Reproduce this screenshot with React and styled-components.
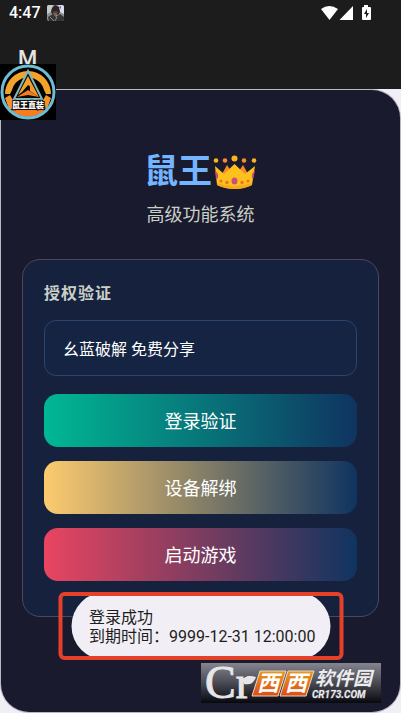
import { useState } from "react";
import styled, { createGlobalStyle, ThemeProvider } from "styled-components";

const theme = {
  bar: "#1c1c1c",
  surface: "#f1eff5",
  panel: "#1a1a2e",
  card: "#16213e",
  field: "#152442",
  fieldBorder: "#2a456f",
  cardBorder: "#484a60",
  muted: "#c9d0c8",
  primary: "#74b5ff",
  navy: "#0f3460",
  alert: "#e5412a",
  font: `Roboto, "Noto Sans CJK SC", sans-serif`,
};

const App = () => {
  const [code, setCode] = useState("幺蓝破解 免费分享");

  return (
    <ThemeProvider theme={theme}>
      <GlobalStyle />
      <Screen>
        <Header>
          <StatusBar>
            <StatusGroup>
              <Time>4:47</Time>
              <Avatar />
            </StatusGroup>
            <StatusIcons />
          </StatusBar>
          <AppName>M</AppName>
        </Header>
        <Panel>
          <Title>
            鼠王
            <Crown />
          </Title>
          <Subtitle>高级功能系统</Subtitle>
          <Card>
            <Label htmlFor="code">授权验证</Label>
            <Field
              id="code"
              type="text"
              value={code}
              onChange={(e) => setCode(e.target.value)}
            />
            <Actions>
              <Action type="button" $from="#00b894">
                登录验证
              </Action>
              <Action type="button" $from="#fdcb6e">
                设备解绑
              </Action>
              <Action type="button" $from="#e94560">
                启动游戏
              </Action>
            </Actions>
          </Card>
        </Panel>
        <FloatingLogo />
        <Highlight>
          <Toast role="status">
            <p>登录成功</p>
            <p>到期时间：9999-12-31 12:00:00</p>
          </Toast>
        </Highlight>
        <Watermark />
      </Screen>
    </ThemeProvider>
  );
};

const Avatar = () => (
  <svg width="17" height="16" viewBox="0 0 17 16" aria-hidden="true">
    <rect width="17" height="16" rx="2" fill="#8d9190" />
    <path d="M0 2Q0 0 2 0H6L4 7L0 9Z" fill="#c3cbc8" />
    <path d="M11 0H15Q17 0 17 2V9L13 7Z" fill="#dcdce6" />
    <path d="M5 3L8 0L12 2L13 7L11 10H6L4 7Z" fill="#292426" />
    <path d="M6 6H11L10 10L8 11L6 9Z" fill="#875c4f" />
    <path d="M6 7H11" stroke="#221c20" />
    <path d="M1 12L6 9L9 12L13 9L17 12V14Q17 16 15 16H2Z" fill="#353536" />
    <path d="M3 12L7 16M10 12L8 16" stroke="#8c8880" />
    <path d="M12 2L14 1V4Z" fill="#7755c8" />
  </svg>
);

const StatusIcons = () => (
  <svg width="50" height="16" viewBox="0 0 50 16" fill="#fff" aria-hidden="true">
    <path d="M0 4Q8 -2 17 4L8.500 15Z" />
    <path d="M32 1V15H18.500Z" />
    <path d="M41 2H43V0H47V2H49Q50 2 50 3V14Q50 15 49 15H42Q41 15 41 14V3Q41 2 42 2Z" />
    <path d="M46 4L43 9H45V13L48 8H46Z" fill="#1c1c1c" />
  </svg>
);

const Crown = () => (
  <svg width="44" height="36" viewBox="0 -2 44 36" aria-hidden="true">
    <path d="M9 19L14 10L20 19ZM24 19L30 10L35 19Z" fill="#f68b2b" />
    <path
      d="M2 11L11 19L21.500 9L32 19L42 11L39 30Q31 34 22 34Q12 34 4 30Z"
      fill="#fcc21b"
    />
    <path d="M4 28Q20 34 39 28L39 30Q31 34 22 34Q12 34 4 30Z" fill="#f5a91c" />
    <path d="M2 16Q6 18 5 23L3 24ZM42 16Q38 18 39 23L40 24Z" fill="#cb4a72" />
    <ellipse cx="21.500" cy="26" rx="3" ry="3.500" fill="#cd4d7d" />
    <g fill="#f06d2d">
      <circle cx="8" cy="26" r="1.500" />
      <circle cx="14" cy="27.500" r="1.700" />
      <circle cx="29" cy="27.500" r="1.700" />
      <circle cx="35" cy="26" r="1.500" />
    </g>
    <g fill="#fbb51c">
      <circle cx="3" cy="5.500" r="2.300" />
      <circle cx="21.500" cy="3.500" r="3" />
      <circle cx="41" cy="5.500" r="2.300" />
    </g>
    <circle cx="12" cy="5.500" r="2.300" fill="#f68b2b" />
    <circle cx="31" cy="5.500" r="2.300" fill="#f68b2b" />
  </svg>
);

const FloatingLogo = () => (
  <LogoSvg viewBox="0 0 56 56" role="img" aria-label="鼠王直装">
    <rect width="56" height="56" fill="#000" />
    <path
      d="M5 30A23 23 0 0 1 51 30L46 30L44 26A16.500 16.500 0 0 0 12 26L10 30Z"
      fill="#f3a22c"
    />
    <path d="M5 34L10 31L13 36V45H9ZM51 34L46 31L43 36V45H47Z" fill="#f3932a" />
    <path d="M11 46H45Q38 53 28 53Q18 53 11 46Z" fill="#f57d20" />
    <circle cx="28" cy="28" r="26" fill="none" stroke="#6ebbd5" strokeWidth="3" />
    <path d="M28 7L42 35H14Z" fill="#080808" stroke="#7fb8bf" strokeWidth="2" />
    <path d="M28 12L31 18V23L28 21L22 28L18 31Z" fill="#f3a22c" />
    <path d="M31 18L39 33L30 27V22Z" fill="#f39a2a" />
    <path d="M17 33L28 26L39 33L28 31Z" fill="#f57d20" />
    <text
      x="28"
      y="44"
      textAnchor="middle"
      fontSize="8"
      fontWeight="900"
      fill="#fff"
      stroke="#14110d"
      strokeWidth="2"
      paintOrder="stroke"
    >
      鼠王直装
    </text>
  </LogoSvg>
);

const Watermark = () => (
  <WatermarkSvg viewBox="0 0 180 40" role="img" aria-label="西西软件园 CR173.COM">
    <defs>
      <linearGradient id="plate" x2="0" y2="1">
        <stop stopColor="#85858f" />
        <stop offset="0.5" stopColor="#494953" />
        <stop offset="1" stopColor="#08080f" />
      </linearGradient>
      <linearGradient id="tile" x2="0" y2="1">
        <stop stopColor="#e79a24" />
        <stop offset="1" stopColor="#df4b18" />
      </linearGradient>
    </defs>
    <rect width="180" height="40" fill="url(#plate)" />
    <text
      x="4"
      y="35"
      fill="#e6e6e8"
      stroke="#e6e6e8"
      fontFamily="Liberation Serif, serif"
      fontSize="46"
    >
      Cr
    </text>
    <path d="M42 18Q44 11 55 14Q52 23 43 21Z" fill="#e6e6e8" />
    <g fill="url(#tile)" stroke="#e9d7c2">
      <path d="M59 8H85L77 33H51Z" />
      <path d="M87 8H113L105 33H79Z" />
    </g>
    <g fill="#fff" fontSize="22" fontStyle="italic" fontWeight="700">
      <text x="56" y="28">
        西
      </text>
      <text x="84" y="28">
        西
      </text>
    </g>
    <g
      fill="#ececee"
      stroke="#55555c"
      strokeWidth="1"
      paintOrder="stroke"
      fontStyle="italic"
      fontWeight="700"
    >
      <text x="114" y="22" fontSize="19">
        软件园
      </text>
      <text x="111" y="35" fontSize="10">
        CR173.COM
      </text>
    </g>
  </WatermarkSvg>
);

const GlobalStyle = createGlobalStyle`
  * {
    box-sizing: border-box;
  }

  body {
    margin: 0;
    background: ${theme.surface};
    font-family: ${theme.font};
  }

  p, h1 {
    margin: 0;
  }
`;

const Screen = styled.div`
  position: relative;
  display: flex;
  flex-flow: column;
  min-height: 100vh;
`;

const Header = styled.header`
  height: 89px;
  background: ${(props) => props.theme.bar};
  color: #fff;
`;

const StatusBar = styled.div`
  display: flex;
  justify-content: space-between;
  align-items: center;
  height: 26px;
  padding: 0 30px 0 9px;
`;

const StatusGroup = styled.div`
  display: flex;
  align-items: center;
  gap: 6px;
`;

const Time = styled.span`
  font-size: 16px;
  font-weight: 500;
  line-height: 20px;
`;

const AppName = styled.div`
  padding: 20px 18px 0;
  color: #e4e4e4;
  font-size: 22px;
  font-weight: 500;
  line-height: 26px;
`;

const Panel = styled.main`
  flex: 1;
  margin: 1px;
  padding: 56px 21px 95px;
  border-radius: 28px;
  background: ${(props) => props.theme.panel};
  box-shadow: 0 0 0 1px #b9b7c1;
`;

const Title = styled.h1`
  display: flex;
  justify-content: center;
  align-items: center;
  gap: 1px;
  color: ${(props) => props.theme.primary};
  font-size: 34px;
  font-weight: 700;
  line-height: 50px;
`;

const Subtitle = styled.p`
  margin-top: 7px;
  color: ${(props) => props.theme.muted};
  font-size: 18px;
  line-height: 24px;
  text-align: center;
`;

const Card = styled.section`
  display: flex;
  flex-flow: column;
  margin-top: 32px;
  padding: 21px 21px 35px;
  border: 1px solid ${(props) => props.theme.cardBorder};
  border-radius: 18px;
  background: ${(props) => props.theme.card};
`;

const Label = styled.label`
  color: ${(props) => props.theme.muted};
  font-size: 16px;
  font-weight: 700;
  letter-spacing: 1px;
  line-height: 26px;
`;

const Field = styled.input`
  width: 100%;
  height: 56px;
  margin-top: 13px;
  padding: 0 18px;
  border: 1px solid ${(props) => props.theme.fieldBorder};
  border-radius: 12px;
  background: ${(props) => props.theme.field};
  color: #fff;
  font-family: inherit;
  font-size: 16px;
`;

const Actions = styled.div`
  display: flex;
  flex-flow: column;
  gap: 14px;
  margin-top: 18px;
`;

const Action = styled.button`
  height: 53px;
  padding: 0 0 2px;
  border: 0;
  border-radius: 14px;
  background: linear-gradient(
    to right,
    ${(props) => props.$from},
    ${(props) => props.theme.navy}
  );
  color: #fff;
  font-family: inherit;
  font-size: 18px;
`;

const LogoSvg = styled.svg`
  position: absolute;
  top: 64px;
  left: 0;
  width: 56px;
  height: 56px;
`;

const Highlight = styled.div`
  position: absolute;
  bottom: 53px;
  left: 50%;
  width: 285px;
  height: 68px;
  transform: translateX(-50%);

  &::after {
    content: "";
    position: absolute;
    inset: 0;
    border: 4px solid ${(props) => props.theme.alert};
    border-radius: 6px;
  }
`;

const Toast = styled.div`
  display: flex;
  flex-flow: column;
  justify-content: center;
  height: 100%;
  margin: 0 13px;
  padding: 2px 18px 0;
  border-radius: 34px;
  background: ${(props) => props.theme.surface};
  color: #1d1d20;
  font-size: 16px;
  line-height: 19px;
  white-space: nowrap;
`;

const WatermarkSvg = styled.svg`
  position: absolute;
  right: 20px;
  bottom: 10px;
  width: 180px;
  height: 40px;
  overflow: visible;
`;

export default App;
